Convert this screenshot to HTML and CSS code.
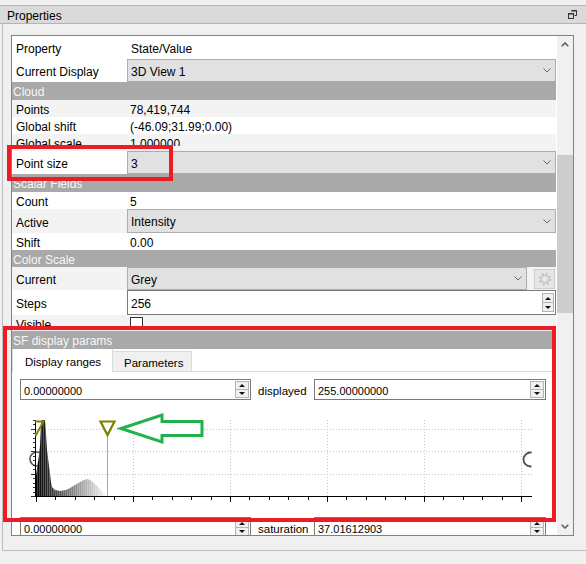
FILE: index.html
```html
<!DOCTYPE html>
<html>
<head>
<meta charset="utf-8">
<link rel="stylesheet" href="styles.css">
</head>
<body>
<div class="dock">
  <div class="titlebar">
    <span class="title">Properties</span>
    <svg class="float-icon" width="9" height="9" viewBox="0 0 9 9"><path d="M3.5 0.5h5v5h-2" fill="none" stroke="#333"/><path d="M3.5 0.5h5" stroke="#333" stroke-width="2"/><rect x="0.5" y="3.5" width="5" height="5" fill="#dadada" stroke="#333"/><path d="M0.5 4h5" stroke="#333" stroke-width="1"/></svg>
  </div>
  <div class="dock-body">
    <div class="frame">
      <div class="viewport">
        <div class="content">
          <div class="row hdr"><div class="k">Property</div><div class="v">State/Value</div></div>
          <div class="row tall"><div class="k">Current Display</div><div class="combo"><span class="ct">3D View 1</span><svg class="chev" width="8" height="5" viewBox="0 0 8 5"><path d="M0.5 0.5L4 4L7.5 0.5"/></svg></div></div>
          <div class="sec">Cloud</div>
          <div class="row alt"><div class="k">Points</div><div class="v">78,419,744</div></div>
          <div class="row"><div class="k">Global shift</div><div class="v">(-46.09;31.99;0.00)</div></div>
          <div class="row alt cut"><div class="k">Global scale</div><div class="v">1.000000</div></div>
          <div class="row tall"><div class="k">Point size</div><div class="combo"><span class="ct">3</span><svg class="chev" width="8" height="5" viewBox="0 0 8 5"><path d="M0.5 0.5L4 4L7.5 0.5"/></svg></div></div>
          <div class="sec">Scalar Fields</div>
          <div class="row"><div class="k">Count</div><div class="v">5</div></div>
          <div class="row tall h24 alt"><div class="k">Active</div><div class="combo"><span class="ct">Intensity</span><svg class="chev" width="8" height="5" viewBox="0 0 8 5"><path d="M0.5 0.5L4 4L7.5 0.5"/></svg></div></div>
          <div class="row"><div class="k">Shift</div><div class="v">0.00</div></div>
          <div class="sec s17">Color Scale</div>
          <div class="row tall alt"><div class="k">Current</div><div class="combo short"><span class="ct">Grey</span><svg class="chev" width="8" height="5" viewBox="0 0 8 5"><path d="M0.5 0.5L4 4L7.5 0.5"/></svg></div>
            <div class="gear-btn"><svg width="14" height="14" viewBox="0 0 14 14"><circle cx="7" cy="7" r="5" fill="none" stroke="#c6c6c6" stroke-width="3" stroke-dasharray="2 1.93"/><circle cx="7" cy="7" r="3.6" fill="none" stroke="#c6c6c6" stroke-width="1.4"/></svg></div>
          </div>
          <div class="row h25"><div class="k">Steps</div>
            <div class="spin big"><span class="txt">256</span><span class="btns"><span class="up"></span><span class="dn"></span></span></div>
          </div>
          <div class="row alt h16"><div class="k">Visible</div><div class="v"><span class="check"></span></div></div>
          <div class="sec">SF display params</div>
          <div class="tabs">
            <div class="tab active">Display ranges</div>
            <div class="tab other">Parameters</div>
          </div>
          <div class="pane">
            <div class="spinrow">
              <div class="spin"><span class="txt">0.00000000</span><span class="btns"><span class="up"></span><span class="dn"></span></span></div>
              <div class="lbl">displayed</div>
              <div class="spin"><span class="txt">255.00000000</span><span class="btns"><span class="up"></span><span class="dn"></span></span></div>
            </div>
            <svg class="hist" width="526" height="115" viewBox="20 400 526 115">
              <defs>
                <linearGradient id="gry" gradientUnits="userSpaceOnUse" x1="36" y1="0" x2="108" y2="0">
                  <stop offset="0" stop-color="#000"/>
                  <stop offset="1" stop-color="#fff"/>
                </linearGradient>
                <pattern id="stripes" patternUnits="userSpaceOnUse" width="2" height="4">
                  <rect x="1" y="0" width="1" height="4" fill="#fff" fill-opacity="0.25"/>
                </pattern>
                <clipPath id="rclip"><rect x="500" y="440" width="31.5" height="40"/></clipPath>
                <clipPath id="lclip"><rect x="35" y="410" width="20" height="40"/></clipPath>
              </defs>
              <g stroke="#c4c4c4" stroke-dasharray="1 2" fill="none">
                <path d="M133.5 420V496M230.5 420V496M327.5 420V496M424.5 420V496M521.5 420V496"/>
                <path d="M36 429.5H532M36 451.5H532M36 474.5H532"/>
              </g>
              <circle cx="37" cy="459" r="7" fill="none" stroke="#505050" stroke-width="1.6"/>
              <path d="M36 496L36 476L37 468L38 462L39 455L40 446L41 424L42 420L45 420L46 434L47 450L48 458L49 466L50 474L51 482L52 487L55 490L60 491L66 490L70 488L75 485L80 482L84 480L87 479L90 480L94 483L98 487L102 491L105 494L107 496Z" fill="url(#gry)"/>
              <path d="M36 496L36 476L37 468L38 462L39 455L40 446L41 424L42 420L45 420L46 434L47 450L48 458L49 466L50 474L51 482L52 487L55 490L60 491L66 490L70 488L75 485L80 482L84 480L87 479L90 480L94 483L98 487L102 491L105 494L107 496Z" fill="url(#stripes)"/>
              <path d="M107.5 428V496" stroke="#a8a8a8"/>
              <g stroke="#000" fill="none">
                <path d="M35.5 420V497M35 496.5H532"/>
                <path d="M36.5 497V502M55.5 497V500M75.5 497V500M94.5 497V500M114.5 497V500M133.5 497V502M152.5 497V500M172.5 497V500M191.5 497V500M211.5 497V500M230.5 497V502M249.5 497V500M269.5 497V500M288.5 497V500M308.5 497V500M327.5 497V502M346.5 497V500M366.5 497V500M385.5 497V500M405.5 497V500M424.5 497V502M443.5 497V500M463.5 497V500M482.5 497V500M502.5 497V500M521.5 497V502"/>
                <path d="M31 496.5H35M33 492.5H35M33 487.5H35M33 483.5H35M33 478.5H35M31 474.5H35M33 469.5H35M33 465.5H35M33 460.5H35M33 456.5H35M31 451.5H35M33 447.5H35M33 442.5H35M33 438.5H35M33 433.5H35M31 429.5H35M33 424.5H35M33 420.5H35" stroke="#333" stroke-width="1"/>
              </g>
              <path d="M28.5 421.5H43.5L36 435Z" fill="none" stroke="#808000" stroke-width="2" clip-path="url(#lclip)"/>
              <path d="M100.5 421.5H114.5L107.5 435Z" fill="#fff" stroke="#808000" stroke-width="2.2" stroke-linejoin="miter"/>
              <circle cx="530.5" cy="459.5" r="7" fill="none" stroke="#505050" stroke-width="1.8" clip-path="url(#rclip)"/>
            </svg>
            <div class="spinrow">
              <div class="spin"><span class="txt">0.00000000</span><span class="btns"><span class="up"></span><span class="dn"></span></span></div>
              <div class="lbl">saturation</div>
              <div class="spin"><span class="txt">37.01612903</span><span class="btns"><span class="up"></span><span class="dn"></span></span></div>
            </div>
          </div>
        </div>
      </div>
      <div class="vscroll">
        <div class="sb-btn"><svg width="8" height="5" viewBox="0 0 8 5"><path d="M0.7 4.3L4 1L7.3 4.3" fill="none" stroke="#606060" stroke-width="1.6"/></svg></div>
        <div class="sb-track"><div class="thumb"></div></div>
        <div class="sb-btn"><svg width="8" height="5" viewBox="0 0 8 5"><path d="M0.7 0.7L4 4L7.3 0.7" fill="none" stroke="#606060" stroke-width="1.6"/></svg></div>
      </div>
    </div>
  </div>
</div>
<svg class="annot" width="586" height="564" viewBox="0 0 586 564">
  <rect x="9" y="147" width="162" height="32" fill="none" stroke="#ed1c24" stroke-width="4"/>
  <rect x="5" y="328" width="549" height="192" fill="none" stroke="#ed1c24" stroke-width="4"/>
  <path d="M121 428.5L162 415V421.5H202V435.5H162V442Z" fill="#fff" stroke="#22b14c" stroke-width="3"/>
</svg>
</body>
</html>
```

FILE: styles.css
```css
* { box-sizing: border-box; }
html, body { margin: 0; padding: 0; }
body {
  width: 586px;
  height: 564px;
  background: #f0f0f0;
  font-family: "Liberation Sans", Arial, sans-serif;
  font-size: 12px;
  color: #000;
  overflow: hidden;
  position: relative;
}
.dock { padding-top: 5px; }
.titlebar {
  height: 19px;
  border-top: 1px solid #b4b4b4;
  border-bottom: 1px solid #b4b4b4;
  background: #dadada;
  display: flex;
  align-items: center;
  justify-content: space-between;
  padding: 0 9px 0 7px;
  line-height: 17px;
}
.title { padding-top: 4px; }
.float-icon { display: block; }
.dock-body {
  margin-left: 2px;
  border-left: 1px solid #bdbdbd;
  border-bottom: 1px solid #bdbdbd;
  height: 527px;
  padding: 11px 0 0 8px;
}
.frame {
  width: 563px;
  height: 501px;
  border: 1px solid #828282;
  display: flex;
}
.viewport {
  width: 545px;
  height: 499px;
  overflow: hidden;
  background: #fff;
}
.content { width: 544px; }
.row { display: flex; height: 17px; line-height: 17px; align-items: stretch; }
.row .k { width: 115px; flex: none; padding-left: 4px; padding-top: 2px; white-space: nowrap; }
.row .v { flex: 1; padding-left: 3px; padding-top: 2px; white-space: nowrap; }
.row.hdr { height: 23px; line-height: 23px; }
.row.hdr .v { padding-left: 4px; }
.row.tall { height: 23px; line-height: 21px; }
.row.h24 { height: 24px; }
.row.h25 { height: 25px; line-height: 23px; }
.row.h16 { height: 16px; line-height: 16px; }
.row.h16 .v { padding-top: 0; }
.row.tall .k { line-height: 23px; }
.row.h24 .k { line-height: 24px; }
.row.h25 .k { line-height: 25px; }
.alt { background: #f3f3f3; }
.row.cut .k, .row.cut .v { height: 12px; overflow: hidden; }
.sec {
  height: 18px;
  line-height: 17px;
  padding-top: 2px;
  background: #a9a9a9;
  color: #f7f7f7;
  padding-left: 1px;
}
.sec.s17 { height: 17px; line-height: 16px; }
.combo {
  flex: 1;
  display: flex;
  align-items: center;
  justify-content: space-between;
  background: #e1e1e1;
  border: 1px solid #adadad;
  padding: 0 4px 0 3px;
}
.combo .ct { align-self: stretch; padding-top: 2px; white-space: nowrap; }
.combo.short { flex: none; width: 400px; }
.chev { display: block; }
.chev path { fill: none; stroke: #6a6a6a; stroke-width: 1; }
.gear-btn {
  width: 21px;
  height: 20px;
  margin: 2px 0 0 7px;
  background: #e6e6e6;
  border: 1px solid #cccccc;
  display: flex;
  align-items: center;
  justify-content: center;
}
.gear-btn svg { display: block; }
.spin {
  display: flex;
  align-items: center;
  background: #fff;
  border: 1px solid #7a7a7a;
  height: 21px;
  font-size: 11px;
}
.spin.big { flex: 1; height: 25px; font-size: 12px; }
.spin .txt { flex: 1; padding-left: 3px; padding-top: 2px; white-space: nowrap; }
.spin.big .txt { padding-top: 4px; }
.spin .btns {
  width: 14px;
  height: 17px;
  margin-right: 1px;
  border: 1px solid #b4b4b4;
  background: #f0f0f0;
  display: flex;
  flex-direction: column;
}
.spin.big .btns { width: 12px; height: 19px; }
.spin .up, .spin .dn {
  flex: 1;
  display: flex;
  align-items: center;
  justify-content: center;
}
.spin .dn { border-top: 1px solid #b4b4b4; }
.spin .up::before {
  content: "";
  border-left: 3px solid transparent;
  border-right: 3px solid transparent;
  border-bottom: 3px solid #111;
}
.spin .dn::before {
  content: "";
  border-left: 3px solid transparent;
  border-right: 3px solid transparent;
  border-top: 3px solid #111;
}
.check {
  display: block;
  width: 13px;
  height: 13px;
  margin-top: 2px;
  border: 1px solid #333;
  background: #fff;
}
.tabs {
  display: flex;
  align-items: flex-end;
  height: 23px;
  border-bottom: 1px solid #d9d9d9;
  font-size: 11.5px;
}
.tab { white-space: nowrap; }
.tab.active {
  width: 101px;
  height: 23px;
  margin-bottom: -1px;
  background: #fff;
  border-left: 1px solid #d9d9d9;
  border-right: 1px solid #d9d9d9;
  padding-left: 12px;
  padding-top: 2px;
  line-height: 23px;
}
.tab.other {
  width: 80px;
  height: 21px;
  margin-bottom: -1px;
  margin-left: -1px;
  background: #f0f0f0;
  border: 1px solid #d9d9d9;
  padding-left: 11px;
  padding-top: 2px;
  line-height: 19px;
}
.pane { padding: 7px 0 0 8px; }
.spinrow {
  display: grid;
  grid-template-columns: 231px 49px 232px;
  column-gap: 7px;
  align-items: center;
  height: 21px;
}
.lbl { font-size: 11.5px; white-space: nowrap; padding-top: 2px; }
.hist { display: block; margin-bottom: 2px; }
.vscroll {
  width: 16px;
  height: 499px;
  background: #f0f0f0;
  display: flex;
  flex-direction: column;
}
.sb-btn {
  height: 17px;
  flex: none;
  display: flex;
  align-items: center;
  justify-content: center;
}
.sb-btn svg { display: block; }
.sb-track { flex: 1; }
.thumb {
  margin-top: 102px;
  height: 158px;
  background: #cdcdcd;
}
.annot {
  position: absolute;
  left: 0;
  top: 0;
  pointer-events: none;
}
```
